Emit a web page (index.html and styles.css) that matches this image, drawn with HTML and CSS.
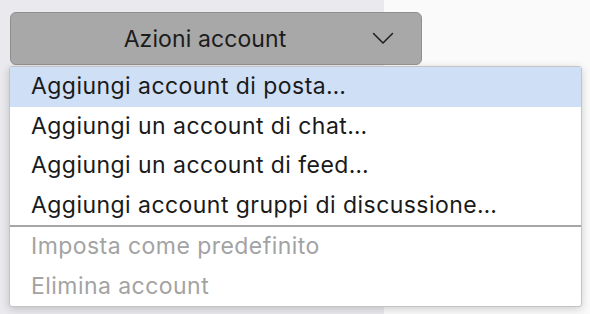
FILE: index.html
```html
<!DOCTYPE html>
<html lang="it">
<head>
<meta charset="utf-8">
<link rel="stylesheet" href="styles.css">
</head>
<body>
<div class="app">
  <aside class="sidebar">
    <button class="actions">
      <span class="actions-label">Azioni account</span>
      <svg class="chevron" width="22" height="13" viewBox="0 0 22 13"><polyline points="1.5,1.5 11,11 20.5,1.5" fill="none" stroke="#1e1e1e" stroke-width="1.5" stroke-linecap="round" stroke-linejoin="round"/></svg>
    </button>
  </aside>
  <main class="content"></main>
  <ul class="menu">
    <li class="item active">Aggiungi account di posta…</li>
    <li class="item">Aggiungi un account di chat…</li>
    <li class="item">Aggiungi un account di feed…</li>
    <li class="item">Aggiungi account gruppi di discussione…</li>
    <li class="sep"></li>
    <li class="item disabled">Imposta come predefinito</li>
    <li class="item disabled">Elimina account</li>
  </ul>
</div>
</body>
</html>
```
FILE: styles.css
```css
html, body {
  margin: 0;
  padding: 0;
  width: 590px;
  height: 314px;
  overflow: hidden;
  font-family: Inter, "Noto Sans", sans-serif;
}
.app {
  position: relative;
  display: flex;
  height: 314px;
}
.sidebar {
  width: 384px;
  background: #e9e9ee;
  padding: 12px 0 0 10px;
  box-sizing: border-box;
}
.content {
  flex: 1;
  background: #fafafa;
}
.actions {
  width: 412px;
  height: 53px;
  box-sizing: border-box;
  background: #a8a8a8;
  border: 1px solid #8f8f8f;
  border-radius: 6px;
  display: flex;
  align-items: center;
  padding: 0 27px 0 0;
  font-family: inherit;
  font-size: 23px;
  letter-spacing: 0.1px;
  color: #1c1c1c;
  position: relative;
  z-index: 1;
}
.actions-label {
  flex: 1;
  text-align: center;
  padding-left: 27px;
}
.chevron {
  display: block;
}
.menu {
  position: absolute;
  left: 9px;
  top: 66px;
  width: 573px;
  margin: 0;
  padding: 0;
  list-style: none;
  background: #ffffff;
  border: 1px solid #c4c4c4;
  border-radius: 3px;
  box-sizing: border-box;
  box-shadow: 0 2px 8px rgba(0,0,0,0.18);
}
.item {
  height: 39.5px;
  line-height: 39.5px;
  padding-left: 21px;
  font-size: 23px;
  letter-spacing: 0.45px;
  color: #1a1a1a;
  white-space: nowrap;
}
.item.active {
  background: #cfdff6;
}
.item.disabled {
  color: #a3a3a3;
}
.sep {
  height: 2px;
  background: #a6a6a6;
  margin: 0;
}
```
